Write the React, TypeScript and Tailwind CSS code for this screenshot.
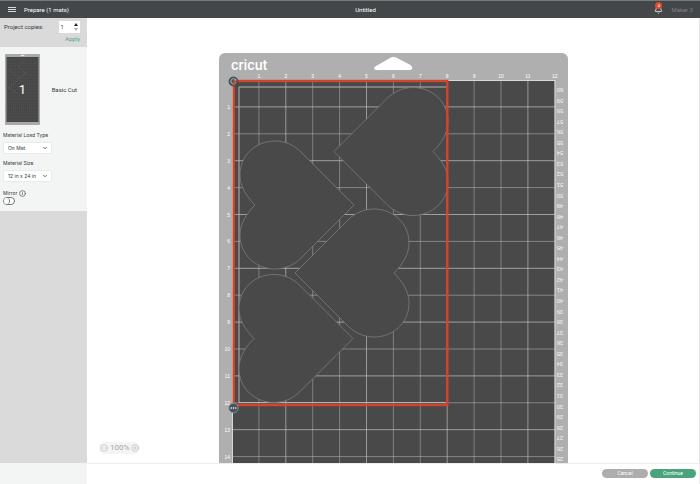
import React from "react";
import { Bell, ChevronDown, CircleMinus, CirclePlus, Info } from "lucide-react";

const STEP = 26.9;
const LEFT = 232;
const TOP = 80;

const columns = Array.from({ length: 12 }, (_, i) => i + 1);
const rows = Array.from({ length: 14 }, (_, i) => i + 1);
const centimetres = Array.from({ length: 36 }, (_, i) => 60 - i);

const HEART =
  "M0 0L-53 -53C-60 -60 -69 -64 -79 -64C-98 -64 -114 -50 -114 -30C-114 -18 -107 -8 -99 0C-107 8 -114 18 -114 30C-114 50 -98 64 -79 64C-69 64 -60 60 -53 53Z";

function Heart({ x, y, flipped = false }: { x: number; y: number; flipped?: boolean }) {
  return (
    <path
      d={HEART}
      transform={`translate(${x} ${y})${flipped ? " scale(-1 1)" : ""}`}
      fill="#494949"
      stroke="#7c7c7c"
      strokeWidth="0.8"
    />
  );
}

function CuttingMat() {
  return (
    <svg
      viewBox="218 53 350 410"
      className="h-[410px] w-[350px] shrink-0"
      role="img"
      aria-label="Cutting mat"
      fontFamily="'Liberation Sans', Arial, sans-serif"
    >
      <path d="M219 500V59a6 6 0 0 1 6-6H562a6 6 0 0 1 6 6V500Z" fill="#afafaf" />
      <path
        d="M376 66L390 58Q393.500 56 397 58L410.500 65Q413 67 412 69Q411.500 70 409 70H377Q374.500 70 374 68.500Q374 67 376 66Z"
        fill="#fff"
      />
      <text x="231" y="70" fontSize="13" fontWeight="600" fill="#fff" fontFamily="Inter, sans-serif">
        cricut
      </text>
      <rect x="232" y="80" width="323" height="420" fill="#494949" />
      <g stroke="#d8d8d8" strokeWidth="1">
        {columns.map((n) => (
          <path key={n} d={`M${LEFT + n * STEP} 80V500`} strokeOpacity={n % 3 === 2 ? 0.55 : 0.38} />
        ))}
        {rows.map((n) => (
          <path key={n} d={`M232 ${TOP + n * STEP}H555`} strokeOpacity={n % 2 ? 0.6 : 0.42} />
        ))}
        <path d="M232.500 500V80.500H555" fill="none" />
        <path d="M555 80V500" />
      </g>
      <g fontSize="5" fill="#fff" textAnchor="middle">
        {columns.map((n) => (
          <text key={n} x={LEFT + n * STEP} y="78">
            {n}
          </text>
        ))}
      </g>
      <g fontSize="5" fill="#fff" textAnchor="end">
        {rows.map((n) => (
          <text key={n} x="230" y={TOP + 2 + n * STEP}>
            {n}
          </text>
        ))}
      </g>
      <g fontSize="6" fill="#f4f4f4" textAnchor="middle">
        {centimetres.map((n, i) => (
          <text key={n} transform={`translate(560 ${88 + i * 10.55}) rotate(180)`}>
            {n}
          </text>
        ))}
      </g>
      <path d="M239 403V87H447M239 402.500H447" fill="none" stroke="#b4b4b4" />
      <Heart x={334} y={151.5} flipped />
      <Heart x={354} y={205} />
      <Heart x={353} y={338.5} />
      <Heart x={295} y={273} flipped />
      <rect x="233.700" y="81" width="213.600" height="324" fill="none" stroke="#d2452c" strokeWidth="2.400" />
      <circle cx="233.500" cy="81.500" r="4.500" fill="#4b5257" stroke="#3a4147" strokeWidth="0.8" />
      <path d="M235.500 79.800a2.600 2.600 0 1 0 .4 2.400M235.800 78.800v1.600h-1.600" fill="none" stroke="#cfd3d6" strokeWidth="0.8" />
      <path d="M234 86V81H238" fill="none" stroke="#d2452c" strokeWidth="1.200" />
      <circle cx="233.500" cy="408" r="4.800" fill="#48545b" stroke="#9aa3a8" strokeWidth="0.7" />
      <g fill="#fff">
        <circle cx="231.200" cy="408" r="0.800" />
        <circle cx="233.500" cy="408" r="0.800" />
        <circle cx="235.800" cy="408" r="0.800" />
      </g>
    </svg>
  );
}

function MatThumbnail() {
  return (
    <svg viewBox="0 0 35 71" className="h-[71px] w-[35px] shrink-0" role="img" aria-label="Mat 1">
      <rect width="35" height="71" rx="1" fill="#a9a9a9" />
      <rect x="1.500" y="3" width="32" height="65" fill="#474747" />
      <path d="M15 1.800h5l-2.500-1.300Z" fill="#fff" />
      <g stroke="#777" strokeWidth="0.500" strokeDasharray="1 1">
        {Array.from({ length: 21 }, (_, i) => (
          <path key={i} d={`M2 ${6 + i * 3}H33`} strokeOpacity="0.6" />
        ))}
      </g>
      <path d="M21 6L13 12L21 20M3 15L14 24L3 35M14 24L22 19M3 33L13 40" fill="none" stroke="#606060" strokeWidth="0.500" />
      <text x="17.500" y="40" fontSize="13" fill="#fff" textAnchor="middle" fontFamily="Roboto, sans-serif">
        1
      </text>
    </svg>
  );
}

function SelectField({ id, label, value }: { id: string; label: string; value: string }) {
  return (
    <div className="flex flex-col gap-[3px]">
      <label htmlFor={id} className="text-[5px]">
        {label}
      </label>
      <div className="grid w-[49px] items-center">
        <select
          id={id}
          defaultValue={value}
          className="col-start-1 row-start-1 h-3 w-full appearance-none border border-[#e9ebea] bg-white pl-1 text-[5px] leading-none"
        >
          <option>{value}</option>
        </select>
        <ChevronDown className="pointer-events-none col-start-1 row-start-1 mr-1 size-[6px] justify-self-end" strokeWidth={3} />
      </div>
    </div>
  );
}

export default function App() {
  return (
    <div className="flex h-screen flex-col overflow-hidden bg-white font-['Inter',sans-serif] text-[5px] leading-2 text-[#33383b]">
      <header className="grid h-[18px] shrink-0 grid-cols-3 items-center border-t border-[#737c7d] bg-[#43474a] pr-[7px] pl-2 font-['Roboto',sans-serif] text-[6px] text-white">
        <div className="flex items-center gap-2">
          <button aria-label="Menu" className="flex w-2 flex-col gap-px">
            <span className="h-px bg-[#d5d7d8]" />
            <span className="h-px bg-[#d5d7d8]" />
            <span className="h-px bg-[#d5d7d8]" />
          </button>
          <span>Prepare (1 mats)</span>
        </div>
        <h1 className="pl-[30px] text-center">Untitled</h1>
        <div className="flex items-center justify-end gap-2">
          <button aria-label="Notifications" className="relative">
            <Bell className="size-[9px]" />
            <span className="absolute -top-[3px] left-px flex size-[7px] items-center justify-center rounded-full bg-[#e2492c] text-[4px] leading-none">
              4
            </span>
          </button>
          <span className="text-[#7c8082]">Maker 3</span>
        </div>
      </header>

      <div className="flex min-h-0 flex-1">
        <aside className="flex w-[87px] shrink-0 flex-col bg-[#dadada]">
          <div className="flex h-[29px] flex-col gap-[2px] pt-[3px] pr-[7px] pl-1">
            <div className="flex items-center justify-between">
              <label htmlFor="copies" className="font-['Roboto',sans-serif] text-[6px]">
                Project copies:
              </label>
              <div className="flex h-3 w-[21px] items-center bg-white pr-[2px]">
                <input id="copies" defaultValue="1" className="w-full min-w-0 pl-[2px] outline-none" />
                <div className="flex flex-col gap-[2px]">
                  <button aria-label="More copies">
                    <svg viewBox="0 0 4 3" className="h-[3px] w-1">
                      <path d="M2 0L4 3H0Z" fill="#222" />
                    </svg>
                  </button>
                  <button aria-label="Fewer copies">
                    <svg viewBox="0 0 4 3" className="h-[3px] w-1">
                      <path d="M2 3L4 0H0Z" fill="#aaa" />
                    </svg>
                  </button>
                </div>
              </div>
            </div>
            <button className="self-end font-['Roboto',sans-serif] text-[6px] text-[#4aa981]">Apply</button>
          </div>

          <div className="flex h-[164px] flex-col bg-[#f3f5f4] px-[3px] pt-[7px]">
            <div className="flex items-center justify-between pr-[7px] pl-[2px]">
              <MatThumbnail />
              <span className="font-['Roboto',sans-serif] text-[6px]">Basic Cut</span>
            </div>
            <div className="flex flex-col gap-[5px] pt-[6px]">
              <SelectField id="load" label="Material Load Type" value="On Mat" />
              <SelectField id="size" label="Material Size" value="12 in x 24 in" />
            </div>
            <div className="flex flex-col pt-[7px]">
              <div className="flex items-center gap-[2px]">
                <label htmlFor="mirror">Mirror</label>
                <Info className="size-[7px]" />
              </div>
              <label htmlFor="mirror" className="flex h-2 w-3 rounded-full border border-[#777] bg-white">
                <input id="mirror" type="checkbox" className="size-[6px] appearance-none rounded-full border-r border-[#777] bg-white" />
              </label>
            </div>
          </div>
        </aside>

        <main className="relative flex min-w-0 flex-1 justify-center overflow-hidden border-r border-[#e3e3e3] pt-[35px]">
          <CuttingMat />
          <div className="absolute bottom-[9px] left-3 flex h-3 items-center gap-[2px] rounded-full bg-[#f3f4f4] px-px font-['Roboto',sans-serif] text-[8px] text-[#a6a6a6]">
            <button aria-label="Zoom out">
              <CircleMinus className="size-2" strokeWidth={1.5} />
            </button>
            <span>100%</span>
            <button aria-label="Zoom in">
              <CirclePlus className="size-2" strokeWidth={1.5} />
            </button>
          </div>
        </main>
      </div>

      <footer className="flex h-[21px] shrink-0">
        <div className="w-[87px] bg-[#f3f5f4]" />
        <div className="flex flex-1 items-center justify-end gap-[2px] border-t border-r border-[#ececec] pr-[3px] pb-px font-['Roboto',sans-serif] text-white">
          <button className="h-[9px] w-[46px] rounded-full bg-[#adadad] leading-none">Cancel</button>
          <button className="h-[9px] w-[46px] rounded-full bg-[#4aa37a] leading-none">Continue</button>
        </div>
      </footer>
    </div>
  );
}
